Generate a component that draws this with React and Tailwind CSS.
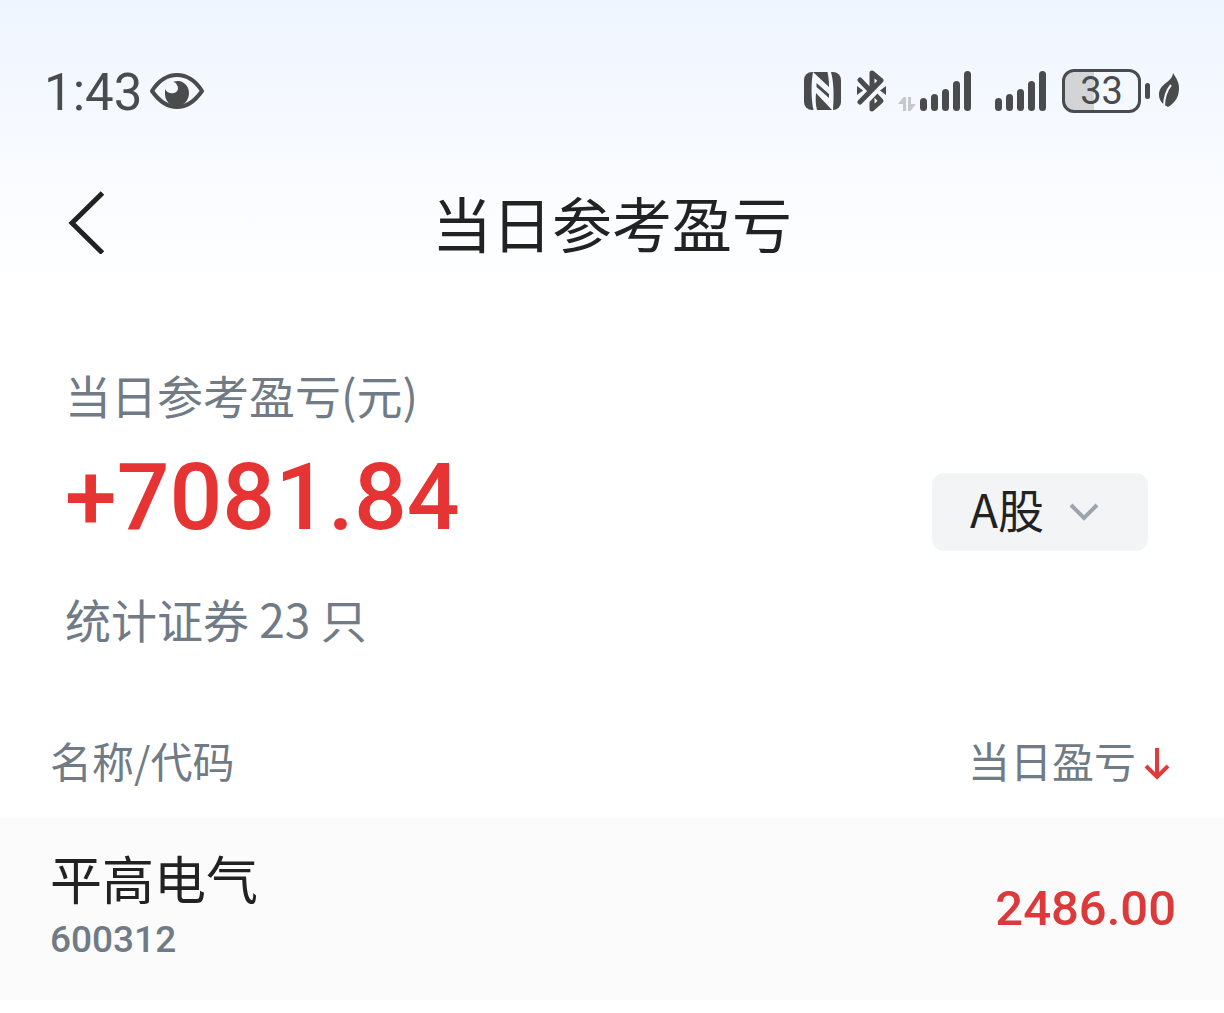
import { useState } from 'react';

const holdings = [{ name: '平高电气', code: '600312', profit: '2486.00' }];

const signalBars = [
  { x: 0, top: 29 },
  { x: 11, top: 25 },
  { x: 22, top: 20 },
  { x: 33, top: 12 },
  { x: 44, top: 2 },
];

function EyeIcon() {
  return (
    <svg viewBox="0 0 54 44" className="h-11 w-[54px]" aria-hidden="true">
      <path
        d="M2 22C9 11 17 6 27 6s18 5 25 16C45 32 37 38 27 38S9 32 2 22Z"
        fill="none"
        stroke="#4a4b4d"
        strokeWidth="4"
        strokeLinejoin="round"
      />
      <path
        d="M15 20c2 4 6 5 9 4 4-1 5-5 3-8-1-2-2-3-4-3 2-1 4-1 6-1 6 1 10 6 10 12 0 7-5 13-12 13s-12-5-12-12c0-2 0-3 0-5Z"
        fill="#4a4b4d"
      />
    </svg>
  );
}

function NfcIcon() {
  return (
    <svg viewBox="0 0 37 44" className="h-11 w-[37px]" aria-hidden="true">
      <rect y="3" width="37" height="38" rx="8" fill="#4a4b4d" />
      <path d="M9 3C7 14 7 30 9.500 41H13C11.500 35 11.500 30 12 24L28 41h1C30 28 30 14 27 3H23.500c1 5 1.500 9 1.500 15Z" fill="#f5f8ff" />
      <path d="M12.500 14 25 25v4L12.500 18Z" fill="#4a4b4d" />
    </svg>
  );
}

function BluetoothIcon() {
  return (
    <svg viewBox="0 0 29 44" className="h-11 w-[29px]" aria-hidden="true">
      <g fill="none" strokeLinecap="round" strokeLinejoin="round">
        <path d="M15 24v16l9-8-8-8.500" stroke="#4a4b4d" strokeWidth="5" />
        <path d="M25 14 5 35" stroke="#f5f8ff" strokeWidth="8" strokeLinecap="butt" />
        <path d="M3 11 13 21.500M15 20V4l9 7.500L3 33" stroke="#4a4b4d" strokeWidth="5" />
      </g>
      <path d="M0 17l6 4.500L0 26ZM29 17l-6 4.500 6 4.500Z" fill="#4a4b4d" />
    </svg>
  );
}

function SignalIcon({ className }) {
  return (
    <svg viewBox="0 0 51 44" className={`h-11 w-[51px] ${className}`} aria-hidden="true">
      {signalBars.map((bar) => (
        <rect key={bar.x} x={bar.x} y={bar.top} width="7" height={42 - bar.top} rx="3.500" fill="#4a4b4d" />
      ))}
    </svg>
  );
}

function StatusBar() {
  return (
    <div className="flex h-[70px] items-center justify-between px-11 font-['Roboto',sans-serif] text-[#4a4b4d]">
      <div className="flex items-center gap-2">
        <span className="pt-1 text-[51px] leading-[70px]">1:43</span>
        <EyeIcon />
      </div>
      <div className="flex items-center">
        <NfcIcon />
        <div className="ml-4">
          <BluetoothIcon />
        </div>
        <svg viewBox="0 0 18 44" className="ml-3 h-11 w-[18px]" aria-hidden="true">
          <path d="M0 35 5.500 28H8v14H5v-7ZM18 35l-5.500 7H10V28h3v7Z" fill="#c6c8cc" />
        </svg>
        <SignalIcon className="ml-1" />
        <SignalIcon className="ml-6" />
        <div className="ml-4 flex h-11 w-[79px] items-center justify-center rounded-xl border-[3px] border-[#4a4b4d] bg-linear-to-r from-[#d2d4d8] from-40% to-transparent to-40% text-[38px] leading-none">
          33
        </div>
        <div className="ml-1 h-4 w-[5px] rounded-full bg-[#4a4b4d]" />
        <svg viewBox="0 0 22 44" className="ml-2 h-11 w-[22px]" aria-hidden="true">
          <path d="M15 4c4 6 6 10 6 15 0 9-4 15-11 19C4 35 1 31 1 26 1 14 14 14 15 4Z" fill="#4a4b4d" />
          <path d="M13 16C8 22 6 29 6 38" fill="none" stroke="#f5f8ff" strokeWidth="2" />
        </svg>
      </div>
    </div>
  );
}

function NavBar() {
  return (
    <nav className="mt-16 grid h-16 grid-cols-[1fr_auto_1fr] items-center px-16">
      <button type="button" aria-label="返回" className="w-10">
        <svg viewBox="0 0 40 64" className="h-16 w-10" aria-hidden="true">
          <path d="M38.500 3 8 33l30.500 30" fill="none" stroke="#222" strokeWidth="5" />
        </svg>
      </button>
      <h1 className="text-[60px] leading-[64px] text-[#222]">当日参考盈亏</h1>
    </nav>
  );
}

function Summary() {
  const [market, setMarket] = useState('A股');

  return (
    <section className="flex items-center justify-between pt-[76px] pr-[76px] pb-[82px] pl-[65px]">
      <div className="text-[46px] leading-[64px] text-[#707b86]">
        <p>当日参考盈亏(元)</p>
        <p className="my-4 font-['Roboto',sans-serif] text-[93px] leading-[112px] font-medium text-[#e63434]">
          +7081.84
        </p>
        <p className="pt-4">统计证券 23 只</p>
      </div>
      <div className="relative mt-3">
        <select
          aria-label="市场"
          value={market}
          onChange={(e) => setMarket(e.target.value)}
          className="h-[78px] w-[216px] appearance-none rounded-xl bg-[#f3f4f6] pr-20 pb-2 pl-[38px] text-[46px] leading-[70px] text-[#222]"
        >
          <option>A股</option>
        </select>
        <svg
          viewBox="0 0 30 20"
          className="pointer-events-none absolute top-[29px] right-[49px] h-5 w-[30px]"
          aria-hidden="true"
        >
          <path d="M2 3 15 16 28 3" fill="none" stroke="#9ca5ae" strokeWidth="4" />
        </svg>
      </div>
    </section>
  );
}

function HoldingsTable() {
  return (
    <table className="w-full">
      <thead>
        <tr className="text-[42px] leading-[56px] text-[#707b86]">
          <th scope="col" className="pb-[30px] pl-[50px] text-left font-normal">
            名称/代码
          </th>
          <th scope="col" className="pr-[50px] pb-[30px] font-normal">
            <button type="button" className="ml-auto flex items-center gap-1">
              当日盈亏
              <svg viewBox="0 0 34 40" className="h-10 w-[34px]" aria-hidden="true">
                <path d="M17 8v29M6 26l11 11 11-11" fill="none" stroke="#e03a3a" strokeWidth="4" />
              </svg>
            </button>
          </th>
        </tr>
      </thead>
      <tbody>
        {holdings.map((item) => (
          <tr key={item.code} className="bg-[#fbfbfb]">
            <td className="pt-[26px] pb-8 pl-[50px]">
              <div className="text-[52px] leading-[68px] text-[#222]">{item.name}</div>
              <div className="font-['Roboto',sans-serif] text-[37px] leading-[56px] font-medium text-[#707b86]">
                {item.code}
              </div>
            </td>
            <td className="pr-12 text-right font-['Roboto',sans-serif] text-[49px] font-medium text-[#dc3a3a]">
              {item.profit}
            </td>
          </tr>
        ))}
      </tbody>
    </table>
  );
}

export default function App() {
  return (
    <main className="min-h-screen bg-white font-['Noto_Sans_CJK_SC',sans-serif]">
      <header className="bg-linear-to-b from-[#eff5ff] to-white pt-14 pb-8">
        <StatusBar />
        <NavBar />
      </header>
      <Summary />
      <HoldingsTable />
    </main>
  );
}
